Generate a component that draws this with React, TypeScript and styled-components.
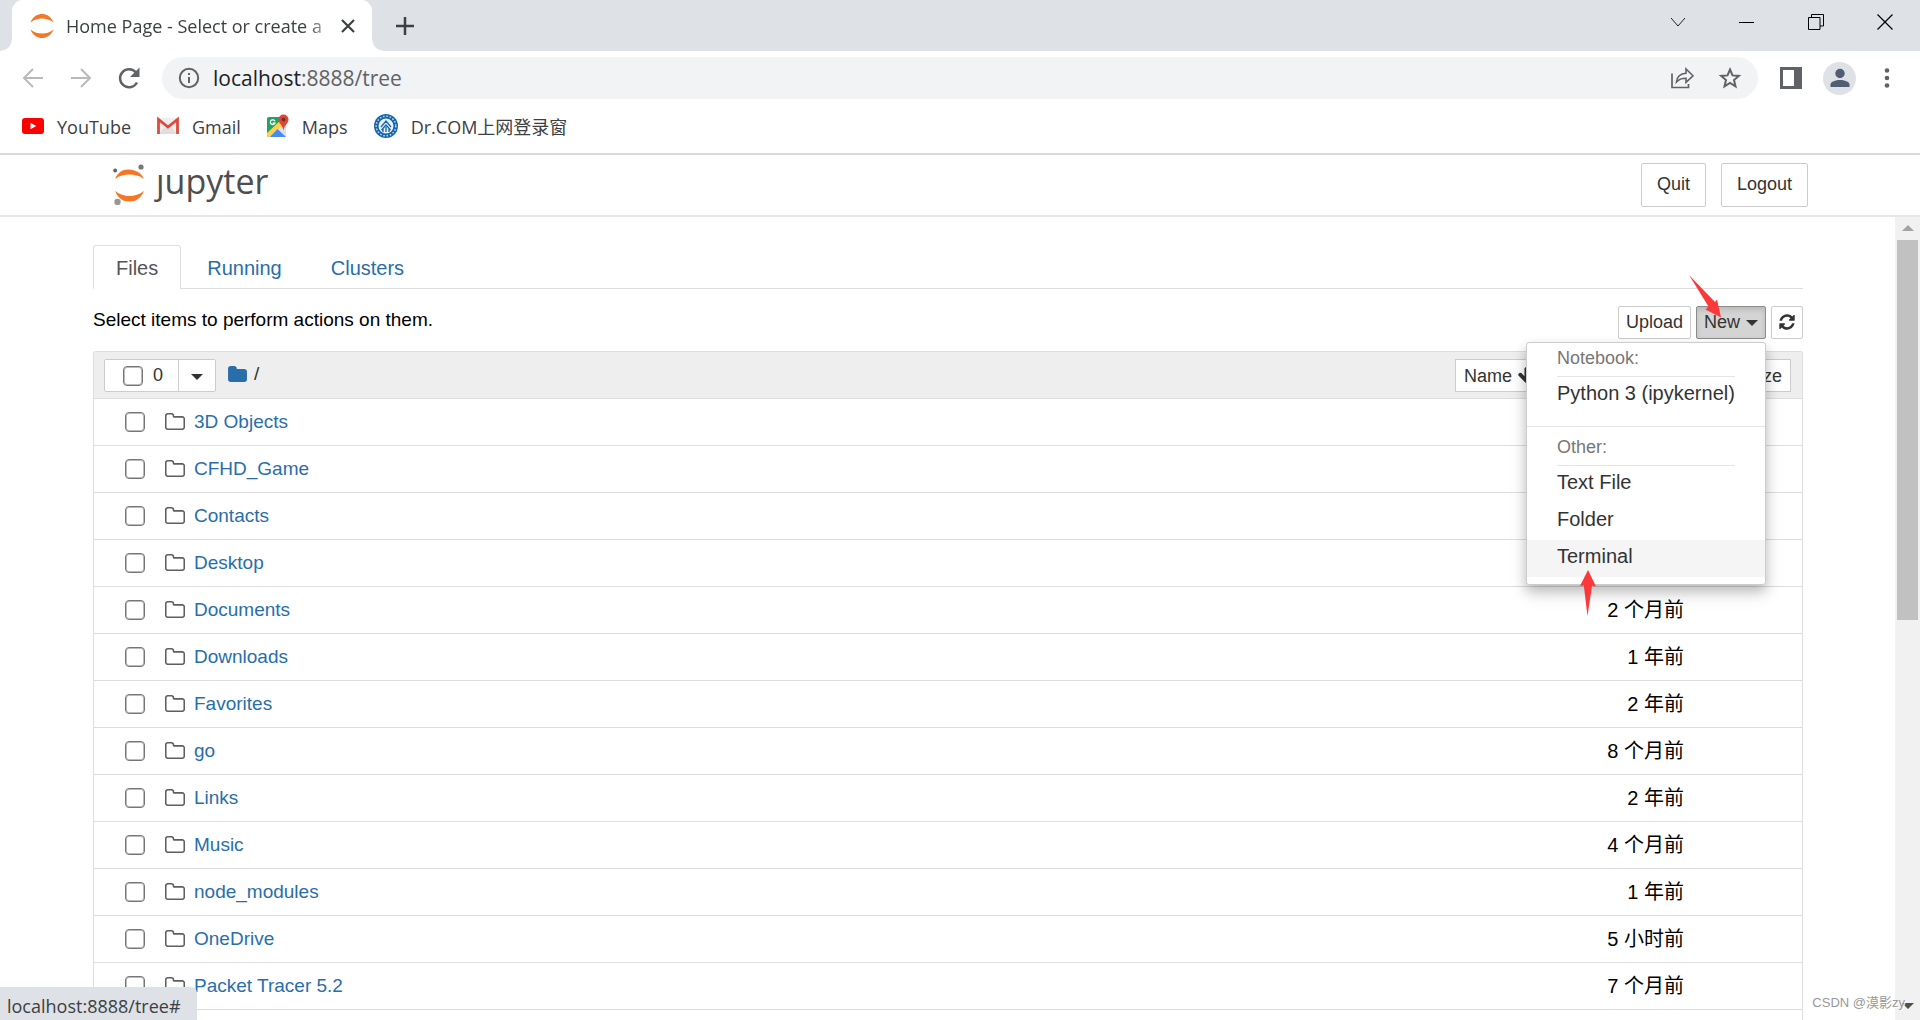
import React from "react";
import styled, { createGlobalStyle, css } from "styled-components";

const uiFont = '"Open Sans", "Noto Sans", "Noto Sans CJK SC", sans-serif';
const pageFont = '"Liberation Sans", Arial, "Noto Sans CJK SC", sans-serif';

const GlobalStyle = createGlobalStyle`
  *, *::before, *::after { box-sizing: border-box; }
  html, body { margin: 0; background: #fff; overflow: hidden; }
  button, input { font: inherit; margin: 0; }
  a { text-decoration: none; }
  svg { display: block; flex: none; }
`;

/* ---------- browser frame ---------- */

const Window = styled.div`
  position: relative;
  display: flex;
  flex-direction: column;
  height: 100vh;
  font-family: ${uiFont};
  color: #3c4043;
`;

const TabStrip = styled.header`
  display: flex;
  align-items: stretch;
  height: 51px;
  padding: 0 1px 0 12px;
  background: #dee1e6;
`;

const Tab = styled.div`
  position: relative;
  display: flex;
  align-items: center;
  gap: 12px;
  width: 360px;
  padding: 0 16px 0 18px;
  background: #fff;
  border-radius: 11px 11px 0 0;

  &::before,
  &::after {
    content: "";
    position: absolute;
    bottom: 0;
    width: 11px;
    height: 11px;
  }
  &::before {
    left: -11px;
    background: radial-gradient(circle at 0 0, transparent 10px, #fff 11px);
  }
  &::after {
    right: -11px;
    background: radial-gradient(circle at 100% 0, transparent 10px, #fff 11px);
  }
`;

const TabTitle = styled.span`
  flex: 1;
  white-space: nowrap;
  font-size: 18px;
  line-height: 28px;
  mask-image: linear-gradient(90deg, #000 92%, transparent 104%);
`;

const IconButton = styled.button`
  display: flex;
  align-items: center;
  justify-content: center;
  padding: 0;
  border: 0;
  background: none;
  color: #5f6368;
`;

const NewTabButton = styled(IconButton)`
  margin-left: 24px;
  color: #3c4043;
`;

const WindowControls = styled.div`
  display: flex;
  margin-left: auto;
`;

const WindowButton = styled(IconButton)`
  width: 69px;
  height: 43px;
  color: #000;
`;

const Toolbar = styled.div`
  display: flex;
  align-items: center;
  height: 54px;
  padding: 0 23px 0 21px;
`;

const NavButtons = styled.div`
  display: flex;
  gap: 24px;
`;

const AddressBar = styled.div`
  display: flex;
  align-items: center;
  flex: 1;
  height: 42px;
  margin-left: 21px;
  padding: 0 16px;
  border-radius: 21px;
  background: #f1f3f4;
  font-size: 21px;
`;

const Host = styled.label`
  margin-left: 13px;
  color: #202124;
`;

const PathInput = styled.input`
  flex: 1;
  min-width: 0;
  padding: 0;
  border: 0;
  outline: 0;
  background: none;
  color: #5f6368;
`;

const AddressActions = styled.div`
  display: flex;
  gap: 24px;
`;

const BrowserActions = styled.div`
  display: flex;
  align-items: center;
  gap: 21px;
  margin-left: 22px;
`;

const Avatar = styled.span`
  display: flex;
  align-items: center;
  justify-content: center;
  width: 33px;
  height: 33px;
  border-radius: 50%;
  background: #dee1e6;
`;

const Bookmarks = styled.nav`
  display: flex;
  align-items: center;
  gap: 26px;
  height: 50px;
  padding: 0 22px 6px;
  border-bottom: 2px solid #d9dadb;
`;

const Bookmark = styled.a`
  display: flex;
  align-items: center;
  gap: 13px;
  color: #3c4043;
  font-size: 18px;
  line-height: 24px;
`;

const BookmarkLabel = styled.span`
  padding-top: 2px;
`;

const StatusBubble = styled.div`
  position: absolute;
  left: 0;
  bottom: 0;
  width: 197px;
  padding: 7px 7px 2px;
  border-radius: 0 6px 0 0;
  background: #dee1e6;
  font-size: 18px;
  line-height: 24px;
`;

const Watermark = styled.div`
  position: absolute;
  right: 15px;
  bottom: 7px;
  color: #999;
  font-family: ${pageFont};
  font-size: 13px;
  line-height: 20px;
  text-shadow: 1px 1px 0 #fff;
`;

/* ---------- notebook page ---------- */

const Page = styled.div`
  display: flex;
  flex-direction: column;
  flex: 1;
  min-height: 0;
  font-family: ${pageFont};
  font-size: 19px;
  color: #000;
`;

const SiteHeader = styled.header`
  display: flex;
  align-items: flex-start;
  gap: 15px;
  height: 62px;
  padding: 8px 112px 0 113px;
  border-bottom: 2px solid #e7e7e7;
`;

const Logo = styled.a`
  display: flex;
  align-items: flex-start;
  gap: 11px;
  margin-right: auto;
  color: #4e4e4e;
  font-family: ${uiFont};
  font-size: 34px;
  line-height: 36px;
`;

const buttonFace = css`
  border: 1px solid #ccc;
  border-radius: 2px;
  background: #fff;
  color: #333;
  font-size: 18px;
  line-height: 24px;
`;

const HeaderButton = styled.button`
  ${buttonFace}
  height: 44px;
  padding: 0 15px 2px;
`;

const ScrollArea = styled.div`
  display: flex;
  flex: 1;
  min-height: 0;
`;

const Site = styled.main`
  display: flex;
  flex-direction: column;
  flex: 1;
  min-width: 0;
  padding: 28px 92px 0 93px;
`;

const Tabs = styled.nav`
  display: flex;
  gap: 3px;
  height: 44px;
  border-bottom: 1px solid #ddd;
`;

const TabLink = styled.a<{ $active?: boolean }>`
  height: 44px;
  padding: 10px 22px;
  border: 1px solid ${(p) => (p.$active ? "#ddd" : "transparent")};
  border-bottom-color: ${(p) => (p.$active ? "#fff" : "transparent")};
  border-radius: 3px 3px 0 0;
  background: ${(p) => (p.$active ? "#fff" : "transparent")};
  color: ${(p) => (p.$active ? "#555" : "#296eaa")};
  font-size: 20px;
  line-height: 24px;
`;

const ActionRow = styled.div`
  display: flex;
  align-items: center;
  gap: 5px;
  padding: 17px 0 12px;
`;

const Hint = styled.span`
  margin-right: auto;
  padding-bottom: 5px;
  line-height: 26px;
`;

const SmallButton = styled.button<{ $pressed?: boolean }>`
  ${buttonFace}
  display: flex;
  align-items: center;
  gap: 6px;
  height: 33px;
  padding: 0 7px 2px;
  white-space: nowrap;
  ${(p) =>
    p.$pressed &&
    css`
      border-color: #8c8c8c;
      background: #d4d4d4;
      box-shadow: inset 0 3px 5px rgba(0, 0, 0, 0.125);
    `}
`;

const RefreshButton = styled(SmallButton)`
  width: 32px;
  justify-content: center;
`;

const Caret = styled.span`
  width: 0;
  height: 0;
  margin-top: 3px;
  border: 6px solid transparent;
  border-top-color: #333;
  border-bottom: 0;
`;

const MenuAnchor = styled.div`
  position: relative;
`;

const Menu = styled.div`
  position: absolute;
  top: 36px;
  right: 0;
  z-index: 2;
  width: 240px;
  padding-bottom: 7px;
  border: 1px solid #ccc;
  border-radius: 3px;
  background: #fff;
  box-shadow: 0 6px 12px rgba(0, 0, 0, 0.18), 0 9px 18px rgba(0, 0, 0, 0.12);
`;

const MenuHeading = styled.div`
  margin: 0 30px;
  padding: 3px 0 6px;
  border-bottom: 1px solid #e5e5e5;
  color: #777;
  font-size: 18px;
  line-height: 24px;
`;

const MenuItem = styled.a<{ $hover?: boolean }>`
  display: block;
  padding: 3px 30px 7px;
  background: ${(p) => (p.$hover ? "#f5f5f5" : "transparent")};
  color: #333;
  font-size: 20px;
  line-height: 27px;
`;

const MenuDivider = styled.hr`
  height: 1px;
  margin: 12px 0 5px;
  border: 0;
  background: #e5e5e5;
`;

const PointerArrow = styled.svg<{ $left: number; $top: number }>`
  position: absolute;
  left: ${(p) => p.$left}px;
  top: ${(p) => p.$top}px;
  z-index: 3;
  fill: #fd3838;
  pointer-events: none;
`;

const ListPanel = styled.div`
  flex: 1;
  min-height: 0;
  overflow: hidden;
  border: 1px solid #ddd;
  border-bottom: 0;
  border-radius: 3px 3px 0 0;
`;

const FileTable = styled.table`
  width: 100%;
  border-spacing: 0;

  th,
  td {
    height: 47px;
    padding: 0;
    border-bottom: 1px solid #ddd;
    font-weight: normal;
    text-align: left;
  }
  th {
    padding-top: 1px;
    background: #eee;
  }
`;

const HeadControls = styled.div`
  display: flex;
  align-items: center;
  padding-left: 10px;
`;

const SelectGroup = styled.div`
  display: flex;
  height: 33px;
  margin-right: 12px;
  border: 1px solid #ccc;
  border-radius: 2px;
  background: #fff;
`;

const SelectAll = styled.label`
  display: flex;
  align-items: center;
  gap: 10px;
  width: 74px;
  padding-left: 18px;
  border-right: 1px solid #ccc;
  color: #333;
  font-size: 18px;
`;

const SelectMenuButton = styled.button`
  display: flex;
  align-items: center;
  justify-content: center;
  width: 36px;
  padding: 0;
  border: 0;
  background: none;
`;

const Breadcrumb = styled.div`
  display: flex;
  align-items: center;
  gap: 7px;
  padding-bottom: 4px;
  color: #333;
`;

const CrumbLink = styled.a`
  color: #296eaa;
`;

const Checkbox = styled.input.attrs({ type: "checkbox" })`
  appearance: none;
  width: 20px;
  height: 20px;
  border: 1px solid #767676;
  border-radius: 4px;
  background: #fff;
  box-shadow: inset 0 0 0 1px #bbb;
`;

const SortButtons = styled.div`
  display: flex;
  justify-content: flex-end;
  padding-right: 11px;
`;

const SortButton = styled(SmallButton)<{ $width: number }>`
  gap: 5px;
  width: ${(p) => p.$width}px;
  padding: 0 8px;
  border-radius: 0;
`;

const FileCell = styled.div`
  display: flex;
  align-items: center;
  padding-left: 31px;
  color: #5e5e5e;
`;

const FileIcon = styled.svg`
  margin: 0 9px 2px 20px;
  fill: currentColor;
`;

const FileLink = styled.a`
  color: #296eaa;
  line-height: 26px;
`;

const Modified = styled.div`
  padding-right: 118px;
  font-size: 20px;
  line-height: 26px;
  text-align: right;
`;

const Scrollbar = styled.div`
  display: flex;
  flex-direction: column;
  align-items: center;
  width: 25px;
  padding: 8px 0 11px;
  background: #f1f1f1;
`;

const Thumb = styled.div`
  width: 21px;
  flex: 0 1 380px;
  margin: 9px 0 auto;
  background: #c1c1c1;
`;

const ScrollArrow = styled.div<{ $down?: boolean }>`
  border: 6px solid transparent;
  ${(p) =>
    p.$down
      ? "border-top-color: #505050; border-bottom: 0;"
      : "border-bottom-color: #a3a3a3; border-top: 0;"}
`;

/* ---------- drawings ---------- */

const folderOutline =
  "M1600 1312v-704q0-40-28-68t-68-28h-704q-40 0-68-28t-28-68v-64q0-40-28-68t-68-28h-320q-40 0-68 28t-28 68v960q0 40 28 68t68 28h1216q40 0 68-28t28-68zm128-704v704q0 92-66 158t-158 66h-1216q-92 0-158-66t-66-158v-960q0-92 66-158t158-66h320q92 0 158 66t66 158v32h672q92 0 158 66t66 158z";
const folderSolid =
  "M1728 608v704q0 92-66 158t-158 66h-1216q-92 0-158-66t-66-158v-960q0-92 66-158t158-66h320q92 0 158 66t66 158v32h672q92 0 158 66t66 158z";
const refreshPath =
  "M1639 1056q0 5-1 7-64 268-268 434.5t-478 166.5q-146 0-282.5-55t-243.5-157l-129 129q-19 19-45 19t-45-19-19-45v-448q0-26 19-45t45-19h448q26 0 45 19t19 45-19 45l-137 137q71 66 161 102t187 36q134 0 250-65t186-179q11-17 53-117 8-23 30-23h192q13 0 22.5 9.5t9.5 22.5zm25-800v448q0 26-19 45t-45 19h-448q-26 0-45-19t-19-45 19-45l138-138q-148-137-349-137-134 0-250 65t-186 179q-11 17-53 117-8 23-30 23h-199q-13 0-22.5-9.5t-9.5-22.5v-7q65-268 270-434.5t480-166.5q146 0 284 55.5t245 156.5l130-129q19-19 45-19t45 19 19 45z";
const arrowDownPath =
  "M1675 832q0 53-37 90l-651 652q-39 37-91 37-53 0-90-37l-651-652q-38-36-38-90 0-53 38-91l74-75q39-37 91-37 53 0 90 37l294 294v-704q0-52 38-90t90-38h128q52 0 90 38t38 90v704l294-294q37-37 90-37 52 0 91 37l75 75q37 39 37 91z";

const JupyterFavicon = () => (
  <svg width="24" height="24" viewBox="0 0 24 24" fill="#f37726">
    <path d="M0.500 8.500C3 2 8 0 12 0s9 2 11.500 8.500C19.500 5.500 16 4.500 12 4.500S4.500 5.500 0.500 8.500z" />
    <path d="M0.500 15.500C3 22 8 24 12 24s9-2 11.500-8.500C19.500 18.500 16 19.500 12 19.500S4.500 18.500 0.500 15.500z" />
  </svg>
);

const JupyterMark = () => (
  <svg width="32" height="42" viewBox="0 0 32 42">
    <path fill="#f37726" d="M2 16C5 9 10 6 16 6.500S28 9 31 16C26.500 12.500 21.500 11.500 16.500 11.500S6.500 12.500 2 16z" />
    <path fill="#f37726" d="M2 28C5 35.500 10 38.500 16.500 38.500S28 35.500 31 28C26.500 31.500 21.500 33 16.500 33S6.500 31.500 2 28z" />
    <circle cx="28" cy="4" r="2.600" fill="#767677" />
    <circle cx="2.200" cy="7.500" r="1.900" fill="#616262" />
    <circle cx="4.500" cy="39" r="3.200" fill="#989798" />
  </svg>
);

const BackIcon = ({ flip = false }) => (
  <svg width="24" height="24" viewBox="0 0 24 24" fill="none" stroke="#b8babd" strokeWidth="2">
    <path d={flip ? "M2 12h19M12 3l9 9-9 9" : "M22 12H3M12 3l-9 9 9 9"} />
  </svg>
);

const ReloadIcon = () => (
  <svg width="24" height="24" viewBox="0 0 24 24">
    <path d="M20 16.500A9 9 0 1 1 19 6.500" fill="none" stroke="#5f6368" strokeWidth="2.500" />
    <path d="M22.500 1.500V11H13z" fill="#5f6368" />
  </svg>
);

const InfoIcon = () => (
  <svg width="22" height="22" viewBox="0 0 22 22">
    <circle cx="11" cy="11" r="9.200" fill="none" stroke="#5f6368" strokeWidth="2" />
    <path d="M10 10h2v6h-2zM10 6h2v2h-2z" fill="#5f6368" />
  </svg>
);

const ShareIcon = () => (
  <svg width="24" height="24" viewBox="0 0 24 24" fill="none" stroke="#5f6368">
    <path d="M2 7.500V21.500H18.500V18" strokeWidth="1.700" />
    <path d="M6.500 16C7 10.500 10.500 7.500 16 7.200V3L23 9.800 16 16.300V12.300C12 12.200 9 13.300 6.500 16z" strokeWidth="1.600" />
  </svg>
);

const StarIcon = () => (
  <svg width="24" height="24" viewBox="0 0 24 24">
    <path
      d="M12 3.500l2.500 5.900 6.400.500-4.900 4.200 1.500 6.200L12 17l-5.500 3.300L8 14.100 3.100 9.900l6.400-.500z"
      fill="none"
      stroke="#5f6368"
      strokeWidth="2"
    />
  </svg>
);

const SidePanelIcon = () => (
  <svg width="22" height="22" viewBox="0 0 22 22">
    <path d="M0 0h22v22H0zM3 3v16h11V3z" fillRule="evenodd" fill="#5f6368" />
  </svg>
);

const MoreIcon = () => (
  <svg width="20" height="24" viewBox="0 0 20 24" fill="#5f6368">
    <circle cx="10" cy="4.500" r="2.300" />
    <circle cx="10" cy="12" r="2.300" />
    <circle cx="10" cy="19.500" r="2.300" />
  </svg>
);

const YouTubeIcon = () => (
  <svg width="22" height="24" viewBox="0 0 22 24">
    <rect y="4" width="22" height="16" rx="3" fill="#f00" />
    <path d="M8.500 8.800v6.400l5.800-3.200z" fill="#fff" />
  </svg>
);

const GmailIcon = () => (
  <svg width="22" height="24" viewBox="0 0 22 24">
    <path d="M2 4h18v16H2z" fill="#eee" />
    <path d="M2 20l7-8 2 1.500 2-1.500 7 8z" fill="#dedede" />
    <path d="M1.500 20V5.500L11 13l9.500-7.500V20" fill="none" stroke="#dd4b3e" strokeWidth="2.800" />
  </svg>
);

const MapsIcon = () => (
  <svg width="22" height="24" viewBox="0 0 22 24">
    <rect y="3" width="19" height="20" rx="2" fill="#1fa463" />
    <path d="M19 6v17H3z" fill="#dfe1e3" />
    <path d="M0 19L15 5l4 3L3 23H2Q0 23 0 21z" fill="#ffd04b" />
    <path d="M10.500 15L19 23H3z" fill="#4889f4" />
    <path d="M8 7.300A2.400 2.400 0 1 0 7.900 9.200H5.600" fill="none" stroke="#fff" strokeWidth="1.300" />
    <path d="M16.500 0.500a5 5 0 0 1 5 5c0 4-4 5-5 11-1-6-5-7-5-11a5 5 0 0 1 5-5z" fill="#e0443a" />
    <circle cx="16.500" cy="5.500" r="1.900" fill="#7e2a22" />
  </svg>
);

const CampusIcon = () => (
  <svg width="24" height="24" viewBox="0 0 24 24" fill="none">
    <circle cx="12" cy="12" r="12" fill="#1565ad" />
    <circle cx="12" cy="12" r="9.800" stroke="#c9ddf0" strokeWidth="1.500" strokeDasharray="1.500 1.800" />
    <circle cx="12" cy="12" r="7.500" fill="#e8f1fa" />
    <path d="M7 13l5-6 5 6M7.500 16l4.500-5 4.500 5M9 18v-3M12 18v-5M15 18v-3" stroke="#1565ad" strokeWidth="1.300" />
  </svg>
);

/* ---------- data ---------- */

const bookmarks = [
  { label: "YouTube", Icon: YouTubeIcon },
  { label: "Gmail", Icon: GmailIcon },
  { label: "Maps", Icon: MapsIcon },
  { label: "Dr.COM上网登录窗", Icon: CampusIcon },
];

const files: { name: string; modified?: string }[] = [
  { name: "3D Objects" },
  { name: "CFHD_Game" },
  { name: "Contacts" },
  { name: "Desktop" },
  { name: "Documents", modified: "2 个月前" },
  { name: "Downloads", modified: "1 年前" },
  { name: "Favorites", modified: "2 年前" },
  { name: "go", modified: "8 个月前" },
  { name: "Links", modified: "2 年前" },
  { name: "Music", modified: "4 个月前" },
  { name: "node_modules", modified: "1 年前" },
  { name: "OneDrive", modified: "5 小时前" },
  { name: "Packet Tracer 5.2", modified: "7 个月前" },
];

/* ---------- sections ---------- */

const BrowserChrome = () => (
  <>
    <TabStrip>
      <Tab>
        <JupyterFavicon />
        <TabTitle>Home Page - Select or create a</TabTitle>
        <IconButton aria-label="Close tab">
          <svg width="16" height="16" viewBox="0 0 16 16" stroke="#3c4043" strokeWidth="2.200">
            <path d="M2 2l12 12M14 2L2 14" />
          </svg>
        </IconButton>
      </Tab>
      <NewTabButton aria-label="New tab">
        <svg width="18" height="18" viewBox="0 0 18 18" stroke="#3c4043" strokeWidth="2.500">
          <path d="M9 0v18M0 9h18" />
        </svg>
      </NewTabButton>
      <WindowControls>
        <WindowButton aria-label="Search tabs">
          <svg width="16" height="16" viewBox="0 0 16 16" fill="none" stroke="#222">
            <path d="M1 4l7 8 7-8" />
          </svg>
        </WindowButton>
        <WindowButton aria-label="Minimize">
          <svg width="16" height="16" viewBox="0 0 16 16" stroke="#000">
            <path d="M0 8.500h15" />
          </svg>
        </WindowButton>
        <WindowButton aria-label="Restore">
          <svg width="16" height="16" viewBox="0 0 16 16" fill="none" stroke="#000">
            <path d="M0.500 3.500h11.500v12H0.500zM3.500 3.500v-3h12v11.500h-3.500" />
          </svg>
        </WindowButton>
        <WindowButton aria-label="Close">
          <svg width="16" height="16" viewBox="0 0 16 16" stroke="#000" strokeWidth="1.200">
            <path d="M0.500 0.500l15 15M15.500 0.500l-15 15" />
          </svg>
        </WindowButton>
      </WindowControls>
    </TabStrip>
    <Toolbar>
      <NavButtons>
        <IconButton aria-label="Back"><BackIcon /></IconButton>
        <IconButton aria-label="Forward"><BackIcon flip /></IconButton>
        <IconButton aria-label="Reload"><ReloadIcon /></IconButton>
      </NavButtons>
      <AddressBar>
        <IconButton aria-label="Site information"><InfoIcon /></IconButton>
        <Host htmlFor="address">localhost</Host>
        <PathInput id="address" defaultValue=":8888/tree" />
        <AddressActions>
          <IconButton aria-label="Share"><ShareIcon /></IconButton>
          <IconButton aria-label="Bookmark"><StarIcon /></IconButton>
        </AddressActions>
      </AddressBar>
      <BrowserActions>
        <IconButton aria-label="Side panel"><SidePanelIcon /></IconButton>
        <IconButton aria-label="Profile">
          <Avatar>
            <svg width="20" height="20" viewBox="0 0 20 20" fill="#515d73">
              <circle cx="10" cy="5.500" r="4.700" />
              <path d="M0.500 19v-2.500C0.500 13.500 6 12 10 12s9.500 1.500 9.500 4.500V19z" />
            </svg>
          </Avatar>
        </IconButton>
        <IconButton aria-label="Menu"><MoreIcon /></IconButton>
      </BrowserActions>
    </Toolbar>
    <Bookmarks>
      {bookmarks.map(({ label, Icon }) => (
        <Bookmark key={label} href="#">
          <Icon />
          <BookmarkLabel>{label}</BookmarkLabel>
        </Bookmark>
      ))}
    </Bookmarks>
  </>
);

const NewMenu = () => (
  <MenuAnchor>
    <SmallButton $pressed>
      New <Caret />
    </SmallButton>
    <PointerArrow $left={-7} $top={-31} width="33" height="43" viewBox="0 0 33 43">
      <path d="M0 0L26 27 28 24.500 32 42.500 16.500 34.500 19.500 31.500z" />
    </PointerArrow>
    <Menu>
      <MenuHeading>Notebook:</MenuHeading>
      <MenuItem href="#">Python 3 (ipykernel)</MenuItem>
      <MenuDivider />
      <MenuHeading>Other:</MenuHeading>
      <MenuItem href="#">Text File</MenuItem>
      <MenuItem href="#">Folder</MenuItem>
      <MenuItem href="#" $hover>Terminal</MenuItem>
      <PointerArrow $left={53} $top={227} width="16" height="46" viewBox="0 0 16 46">
        <path d="M8 0l8 16.500-4-.800L7.500 46 3.800 15.500 0 16z" />
      </PointerArrow>
    </Menu>
  </MenuAnchor>
);

const FileList = () => (
  <ListPanel>
    <FileTable>
      <thead>
        <tr>
          <th>
            <HeadControls>
              <SelectGroup>
                <SelectAll>
                  <Checkbox />0
                </SelectAll>
                <SelectMenuButton aria-label="Select by type"><Caret /></SelectMenuButton>
              </SelectGroup>
              <Breadcrumb>
                <CrumbLink href="#" aria-label="Home folder">
                  <svg width="19" height="16" viewBox="64 128 1664 1408" fill="currentColor">
                    <path d={folderSolid} />
                  </svg>
                </CrumbLink>
                /
              </Breadcrumb>
            </HeadControls>
          </th>
          <th>
            <SortButtons>
              <SortButton $width={84}>
                Name
                <svg width="19" height="19" viewBox="0 0 1792 1792" fill="#333">
                  <path d={arrowDownPath} />
                </svg>
              </SortButton>
              <SortButton $width={199}>Last Modified</SortButton>
              <SortButton $width={53}>Size</SortButton>
            </SortButtons>
          </th>
        </tr>
      </thead>
      <tbody>
        {files.map((file) => (
          <tr key={file.name}>
            <td>
              <FileCell>
                <Checkbox aria-label={file.name} />
                <FileIcon width="20" height="17" viewBox="64 128 1664 1408">
                  <path d={folderOutline} />
                </FileIcon>
                <FileLink href="#">{file.name}</FileLink>
              </FileCell>
            </td>
            <td>{file.modified && <Modified>{file.modified}</Modified>}</td>
          </tr>
        ))}
      </tbody>
    </FileTable>
  </ListPanel>
);

export default function App() {
  return (
    <Window>
      <GlobalStyle />
      <BrowserChrome />
      <Page>
        <SiteHeader>
          <Logo href="#" aria-label="jupyter">
            <JupyterMark />
            <span>ȷupyter</span>
          </Logo>
          <HeaderButton>Quit</HeaderButton>
          <HeaderButton>Logout</HeaderButton>
        </SiteHeader>
        <ScrollArea>
          <Site>
            <Tabs>
              <TabLink href="#" $active>Files</TabLink>
              <TabLink href="#">Running</TabLink>
              <TabLink href="#">Clusters</TabLink>
            </Tabs>
            <ActionRow>
              <Hint>Select items to perform actions on them.</Hint>
              <SmallButton>Upload</SmallButton>
              <NewMenu />
              <RefreshButton aria-label="Refresh">
                <svg width="18" height="18" viewBox="0 0 1792 1792" fill="#333">
                  <path d={refreshPath} />
                </svg>
              </RefreshButton>
            </ActionRow>
            <FileList />
          </Site>
          <Scrollbar>
            <ScrollArrow />
            <Thumb />
            <ScrollArrow $down />
          </Scrollbar>
        </ScrollArea>
      </Page>
      <StatusBubble>localhost:8888/tree#</StatusBubble>
      <Watermark>CSDN @漠影zy</Watermark>
    </Window>
  );
}
